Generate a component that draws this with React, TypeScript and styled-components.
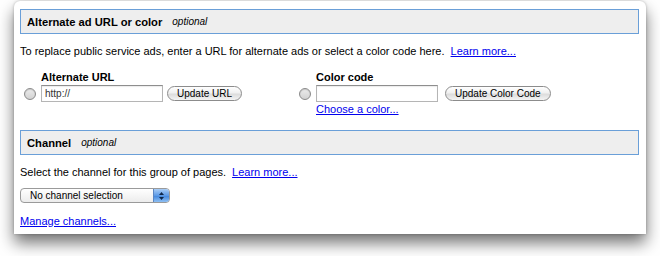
import React, { useState } from "react";
import styled, { createGlobalStyle } from "styled-components";

const GlobalStyle = createGlobalStyle`
  html, body {
    margin: 0;
    padding: 0;
    background: #ffffff;
  }
  body {
    font-family: "Liberation Sans", Arial, sans-serif;
    font-size: 11px;
    color: #000;
  }
`;

const Page = styled.div`
  width: 660px;
  height: 256px;
  padding: 1px 0 0 14px;
  box-sizing: border-box;
  overflow: hidden;
`;

const Window = styled.div`
  width: 632px;
  height: 233px;
  background: #fff;
  border-radius: 6px 6px 0 0;
  box-shadow: 0 9px 16px rgba(0, 0, 0, 0.55), 0 0 3px rgba(0, 0, 0, 0.25);
  padding: 8px 7px 0 6px;
  box-sizing: border-box;
  display: flex;
  flex-direction: column;
`;

const SectionHeader = styled.div<{ $gap: number }>`
  height: 25px;
  box-sizing: border-box;
  border: 1px solid #6a9fd8;
  background: #eeeeee;
  display: flex;
  align-items: center;
  padding: 0 0 0 6px;
  margin-top: ${(p) => p.$gap}px;
  gap: 10px;
`;

const Title = styled.span`
  font-weight: bold;
  font-size: 11.2px;
`;

const Optional = styled.span`
  font-style: italic;
  font-size: 10px;
`;

const Paragraph = styled.p<{ $gap: number }>`
  margin: ${(p) => p.$gap}px 0 0 0;
  font-size: 11px;
  line-height: 14px;
`;

const Link = styled.a`
  color: #0000ee;
  text-decoration: underline;
  cursor: pointer;
  margin-left: 6px;
`;

const Columns = styled.div`
  display: flex;
  margin-top: 12px;
  padding-left: 4px;
`;

const Option = styled.div<{ $width: number }>`
  width: ${(p) => p.$width}px;
  display: grid;
  grid-template-columns: 17px auto;
  grid-template-rows: 14px 19px 12px;
`;

const FieldLabel = styled.div`
  grid-column: 2;
  font-weight: bold;
  font-size: 11px;
  line-height: 14px;
`;

const Radio = styled.span<{ $checked: boolean }>`
  grid-column: 1;
  align-self: center;
  width: 10px;
  height: 10px;
  border-radius: 50%;
  border: 1px solid #8a8a8a;
  background: ${(p) =>
    p.$checked
      ? "radial-gradient(circle, #2a5fb0 0 2px, #9cc3ef 3px)"
      : "linear-gradient(#ececec, #d2d2d2)"};
  box-shadow: inset 0 1px 1px rgba(0, 0, 0, 0.15);
  cursor: pointer;
`;

const InputRow = styled.div`
  display: flex;
  align-items: center;
  gap: 4px;
`;

const TextInput = styled.input`
  width: 122px;
  height: 17px;
  box-sizing: border-box;
  border: 1px solid #b5b5b5;
  border-top-color: #8e8e8e;
  padding: 0 3px;
  font-family: "Liberation Sans", Arial, sans-serif;
  font-size: 10px;
  color: #333;
  outline: none;
  box-shadow: inset 0 1px 1px rgba(0, 0, 0, 0.08);
`;

const PillButton = styled.button<{ $left: number }>`
  height: 15px;
  margin-left: ${(p) => p.$left}px;
  padding: 0 9px;
  border: 1px solid #8c8c8c;
  border-radius: 8px;
  background: linear-gradient(#ffffff 0%, #f0f0f0 45%, #dcdcdc 55%, #f4f4f4 100%);
  font-family: "Liberation Sans", Arial, sans-serif;
  font-size: 10px;
  line-height: 13px;
  color: #000;
  cursor: pointer;
`;

const SubLink = styled.a`
  grid-column: 2;
  color: #0000ee;
  text-decoration: underline;
  font-size: 11px;
  line-height: 12px;
  cursor: pointer;
`;

const Select = styled.div`
  margin-top: 9px;
  width: 150px;
  height: 15px;
  box-sizing: border-box;
  border: 1px solid #9a9a9a;
  border-radius: 4px;
  background: linear-gradient(#ffffff, #ececec);
  display: flex;
  align-items: center;
  font-size: 10px;
  overflow: hidden;
`;

const SelectText = styled.span`
  flex: 1;
  padding-left: 9px;
`;

const SelectArrows = styled.span`
  width: 15px;
  height: 100%;
  background: linear-gradient(#a9cdf6, #5d9ae6 50%, #3f84dc 51%, #8ec0f4);
  border-left: 1px solid #5c86c2;
  display: flex;
  align-items: center;
  justify-content: center;
`;

const BottomLink = styled.a`
  margin-top: 11px;
  align-self: flex-start;
  color: #0000ee;
  text-decoration: underline;
  font-size: 11px;
  line-height: 14px;
  cursor: pointer;
`;

export default function App() {
  const [choice, setChoice] = useState<"url" | "color" | null>(null);
  const [url, setUrl] = useState("http://");
  const [color, setColor] = useState("");

  return (
    <Page>
      <GlobalStyle />
      <Window>
        <SectionHeader $gap={0}>
          <Title>Alternate ad URL or color</Title>
          <Optional>optional</Optional>
        </SectionHeader>
        <Paragraph $gap={10}>
          To replace public service ads, enter a URL for alternate ads or select a color code here.
          <Link>Learn more...</Link>
        </Paragraph>
        <Columns>
          <Option $width={275}>
            <FieldLabel>Alternate URL</FieldLabel>
            <Radio $checked={choice === "url"} onClick={() => setChoice("url")} />
            <InputRow>
              <TextInput value={url} onChange={(e) => setUrl(e.target.value)} />
              <PillButton $left={0}>Update URL</PillButton>
            </InputRow>
          </Option>
          <Option $width={260}>
            <FieldLabel>Color code</FieldLabel>
            <Radio $checked={choice === "color"} onClick={() => setChoice("color")} />
            <InputRow>
              <TextInput value={color} onChange={(e) => setColor(e.target.value)} />
              <PillButton $left={3}>Update Color Code</PillButton>
            </InputRow>
            <SubLink>Choose a color...</SubLink>
          </Option>
        </Columns>
        <SectionHeader $gap={15}>
          <Title>Channel</Title>
          <Optional>optional</Optional>
        </SectionHeader>
        <Paragraph $gap={10}>
          Select the channel for this group of pages.
          <Link>Learn more...</Link>
        </Paragraph>
        <Select>
          <SelectText>No channel selection</SelectText>
          <SelectArrows>
            <svg width="7" height="10" viewBox="0 0 7 10">
              <path d="M3.5 1 L6 4 H1 Z" fill="#10284a" />
              <path d="M3.5 9 L6 6 H1 Z" fill="#10284a" />
            </svg>
          </SelectArrows>
        </Select>
        <BottomLink>Manage channels...</BottomLink>
      </Window>
    </Page>
  );
}
